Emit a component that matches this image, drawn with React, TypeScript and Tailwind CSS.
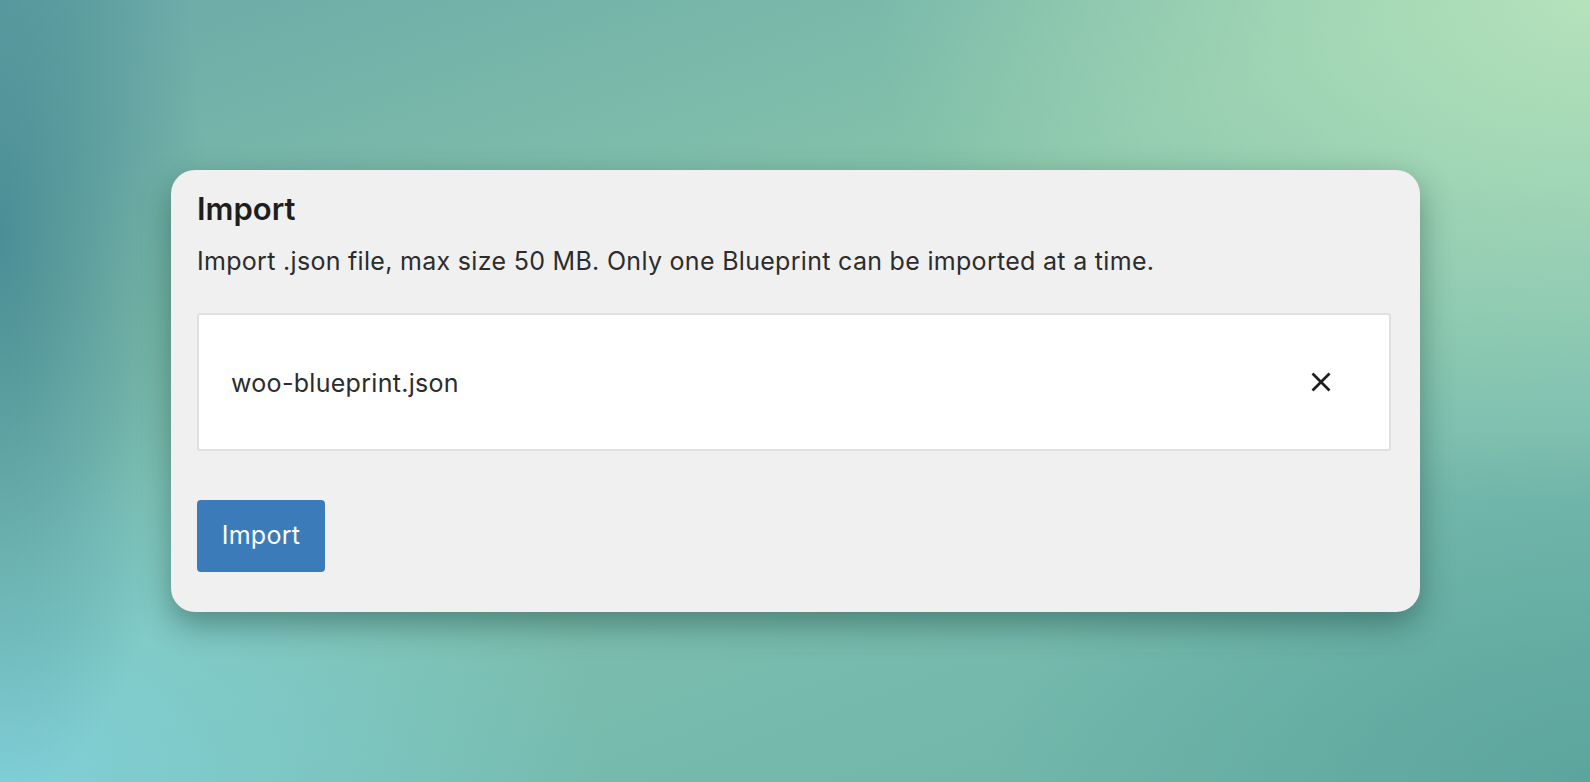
import { useState } from "react";

function CloseIcon() {
  return (
    <svg width="20" height="20" viewBox="0 0 20 20" fill="none" stroke="#1e1e1e" strokeWidth="2.6">
      <path d="M1.5 1.5 18.5 18.5" />
      <path d="M18.5 1.5 1.5 18.5" />
    </svg>
  );
}

export default function App() {
  const [file, setFile] = useState<string | null>("woo-blueprint.json");

  return (
    <div
      className="w-full h-[782px] overflow-hidden pt-[170px] pl-[171px] bg-[radial-gradient(ellipse_13%_72%_at_0%_30%,rgba(70,138,148,0.9),transparent),radial-gradient(ellipse_11%_24%_at_10%_42%,rgba(128,192,168,0.4),transparent),radial-gradient(ellipse_38%_45%_at_100%_100%,rgba(88,162,156,0.8),transparent),radial-gradient(ellipse_45%_65%_at_100%_0%,#b4e2bb,transparent),radial-gradient(ellipse_38%_62%_at_0%_100%,#80d0d8,transparent),linear-gradient(160deg,#6aa9a8,#86c4ab_40%,#77bbae_70%,#6cb2a6)]"
      style={{ fontFamily: "Inter, 'Noto Sans', sans-serif" }}
    >
      {/* Import card */}
      <div className="w-[1249px] h-[442px] rounded-[24px] bg-[#f0f0f0] pt-[21px] pl-[26px] pr-[29px] shadow-[0_12px_32px_rgba(20,60,50,0.45)]">
        <h1 className="text-[31px] leading-[36px] font-semibold text-[#1e1e1e]">Import</h1>
        <p className="mt-[18px] text-[25px] leading-[32px] tracking-[0.3px] text-[#2c2c2c]">
          Import .json file, max size 50 MB. Only one Blueprint can be imported at a time.
        </p>

        <div className="mt-[36px] h-[138px] flex items-center justify-between bg-white border-2 border-[#e0e0e0] rounded-[3px] pl-[32px] pr-[58px]">
          <span className="pt-[4px] text-[25px] tracking-[0.3px] text-[#2c2c2c]">{file}</span>
          <button onClick={() => setFile(null)} className="flex items-center">
            <CloseIcon />
          </button>
        </div>

        <button className="mt-[49px] w-[128px] h-[72px] rounded-[4px] bg-[#3c7bb9] text-white text-[25px] tracking-[0.3px] flex items-center justify-center">
          Import
        </button>
      </div>
    </div>
  );
}
